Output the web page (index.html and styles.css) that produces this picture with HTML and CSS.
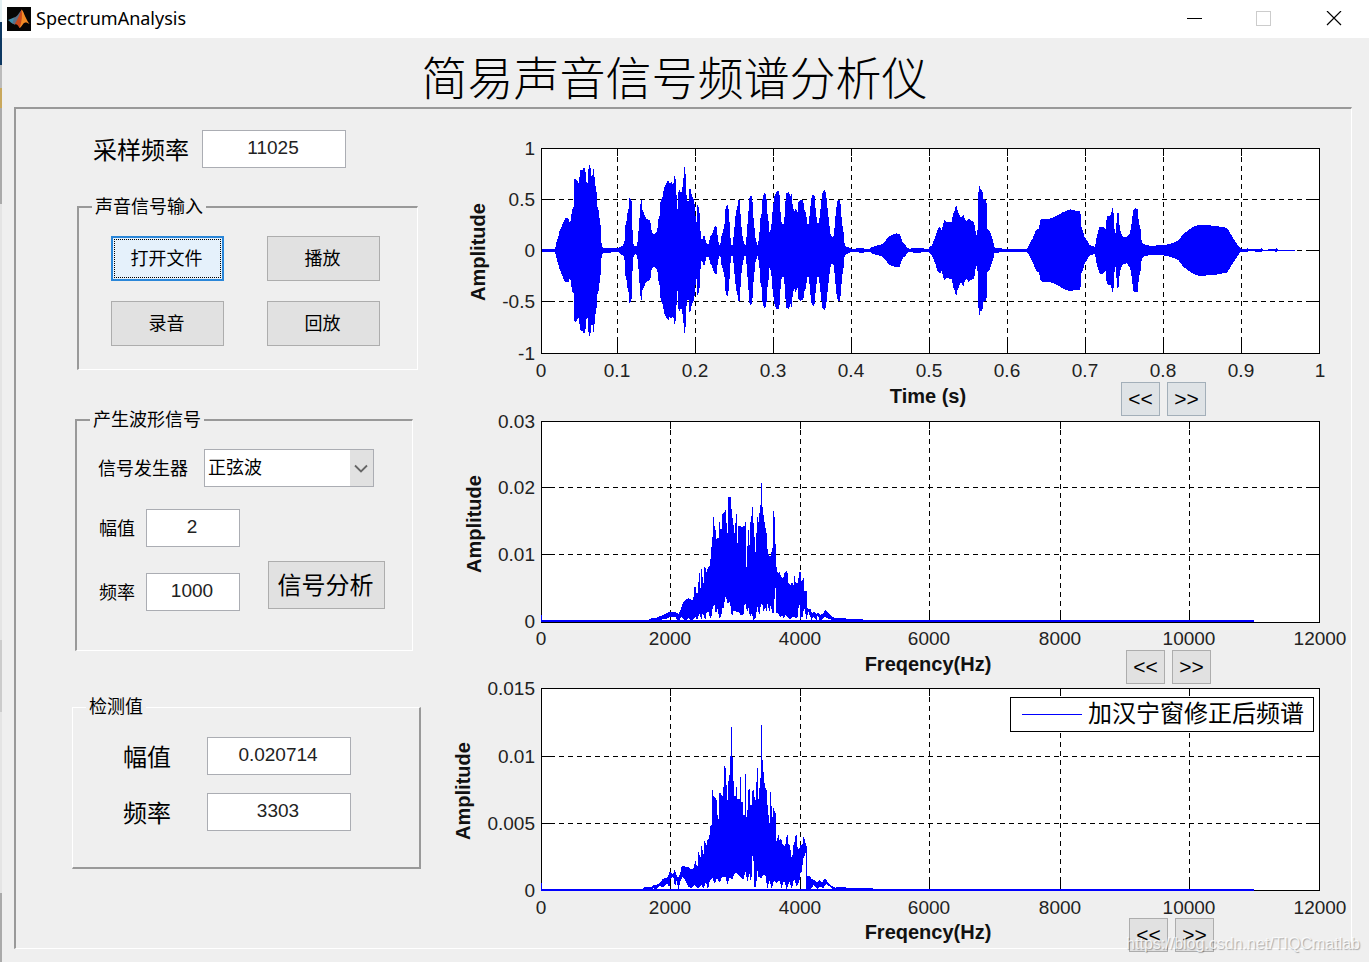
FILE: index.html
```html
<!DOCTYPE html>
<html lang="zh-CN">
<head>
<meta charset="utf-8">
<title>SpectrumAnalysis</title>
<link rel="stylesheet" href="styles.css">
</head>
<body>
<div class="window">
  <header class="titlebar">
    <svg class="app-icon" width="24" height="24" viewBox="0 0 24 24" aria-hidden="true">
      <rect width="24" height="24" fill="#050505"/>
      <path d="M1 13 7 10.5 10 12 7.5 17.5 4.5 16z" fill="#3f8fae"/>
      <path d="M7 10.5C10 10 12 6 14.5 3L12 12 8 17.5 5.500 16.500z" fill="#5d6f86"/>
      <path d="M14.500 2.500C13 6 11.500 11 7.500 17.500 9.500 16.500 11 18 12.500 21 15 19 16 15.500 18 15.500L17 7z" fill="#c8481c"/>
      <path d="M14.500 2.500C16.500 3.500 18 11 22.500 17 20 15.500 18 14.500 16 17 15 18.500 13.500 20.500 12.500 21 15 15 15.500 8 14.500 2.500z" fill="#f08a25"/>
    </svg>
    <span class="app-name">SpectrumAnalysis</span>
    <div class="window-controls">
      <button type="button" aria-label="最小化"><svg width="16" height="16" viewBox="0 0 16 16"><path d="M1 7.500H16" stroke="#000"/></svg></button>
      <button type="button" aria-label="最大化" disabled><svg width="16" height="16" viewBox="0 0 16 16"><rect x=".5" y=".5" width="14" height="14" fill="none" stroke="#ccc"/></svg></button>
      <button type="button" aria-label="关闭"><svg width="16" height="16" viewBox="0 0 16 16"><path d="M1 0 15 14M15 0 1 14" stroke="#000" stroke-width="1.200"/></svg></button>
    </div>
  </header>
  <h1 class="heading">简易声音信号频谱分析仪</h1>
  <main class="panel">
    <form class="controls">
      <div class="field sampling">
        <label class="large" for="rate">采样频率</label>
        <input class="wide" id="rate" type="text" value="11025">
      </div>
      <fieldset class="group sound">
        <legend>声音信号输入</legend>
        <div class="button-grid">
          <button class="btn focused" type="button">打开文件</button>
          <button class="btn" type="button">播放</button>
          <button class="btn" type="button">录音</button>
          <button class="btn" type="button">回放</button>
        </div>
      </fieldset>
      <fieldset class="group generator">
        <legend>产生波形信号</legend>
        <div class="field source">
          <label for="source">信号发生器</label>
          <span class="select">
            <select id="source"><option>正弦波</option></select>
            <svg class="arrow" viewBox="0 0 23 34" aria-hidden="true"><path d="M5 14.500 11 20.500 17 14.500" fill="none" stroke="#666" stroke-width="1.800"/></svg>
          </span>
        </div>
        <div class="wave">
          <div class="wave-fields">
            <div class="field"><label for="amp">幅值</label><input id="amp" type="text" value="2"></div>
            <div class="field"><label for="freq">频率</label><input id="freq" type="text" value="1000"></div>
          </div>
          <button class="btn analyse" type="button">信号分析</button>
        </div>
      </fieldset>
      <fieldset class="group result">
        <legend>检测值</legend>
        <div class="result-fields">
          <div class="field"><label class="large" for="ramp">幅值</label><input class="wide" id="ramp" type="text" value="0.020714"></div>
          <div class="field"><label class="large" for="rfreq">频率</label><input class="wide" id="rfreq" type="text" value="3303"></div>
        </div>
      </fieldset>
    </form>

    <section class="charts">
      <figure class="chart">
        <svg class="plot" viewBox="440 109 911 273" role="img" aria-label="Amplitude / Time (s)">
          <rect class="area" x="541" y="148" width="779" height="205"/>
          <path class="grid" d="M541 199.500H1320M541 250.500H1320M541 301.500H1320M617.500 148V353M695.500 148V353M773.500 148V353M851.500 148V353M929.500 148V353M1007.500 148V353M1085.500 148V353M1163.500 148V353M1241.500 148V353"/>
          <path class="tick" d="M541 199.500h12M541 250.500h12M541 301.500h12M1320 199.500h-14M1320 250.500h-14M1320 301.500h-14M617.500 148v8m0 197v-12M695.500 148v8m0 197v-12M773.500 148v8m0 197v-12M851.500 148v8m0 197v-12M929.500 148v8m0 197v-12M1007.500 148v8m0 197v-12M1085.500 148v8m0 197v-12M1163.500 148v8m0 197v-12M1241.500 148v8m0 197v-12"/>
          <g class="signal" transform="translate(530 130) scale(.33333)">
            <path id="half" d="M33 361 33 357 75 357 78 345 80 335 85 320 88 305 93 295 98 282 103 270 106 265 115 265 118 275 121 278 123 258 128 235 131 232 131 150 136 145 140 150 146 160 148 160 149 125 153 118 158 120 161 113 166 115 168 155 174 160 176 105 181 105 183 135 187 140 190 117 193 118 194 160 199 178 202 230 206 240 208 262 211 270 213 330 217 350 221 354 265 355 272 350 280 345 284 330 285 290 290 270 292 250 296 235 298 203 301 203 302 210 305 215 307 290 310 340 315 350 320 348 324 330 327 280 330 250 332 215 335 210 337 240 342 250 348 266 358 270 362 280 365 305 371 312 378 308 382 300 385 270 389 255 392 210 398 200 402 175 408 160 415 150 418 160 424 156 430 165 432 138 436 140 439 180 441 238 444 238 446 170 450 185 456 185 460 150 463 112 466 112 468 185 473 215 477 210 479 167 482 180 486 200 490 205 494 225 498 275 500 275 502 225 507 235 510 262 512 315 515 330 519 325 522 310 525 325 530 342 537 342 540 320 546 315 550 300 555 288 560 290 563 320 567 345 571 345 574 320 580 300 584 280 586 240 590 225 594 225 597 250 600 300 603 345 608 345 612 310 615 275 618 245 622 230 625 210 629 210 632 260 636 310 640 330 644 345 648 345 651 300 655 250 658 205 663 195 667 205 669 250 673 290 677 330 683 345 688 320 690 270 695 250 698 200 704 188 709 195 711 240 716 275 719 312 724 290 727 250 730 225 733 200 740 185 748 183 750 230 755 280 762 282 765 240 768 190 776 186 782 200 786 188 788 230 793 245 798 232 802 255 805 215 812 210 820 212 822 235 828 250 832 282 837 280 840 240 845 200 850 193 854 200 857 240 862 280 867 280 870 250 874 215 877 190 883 180 888 190 892 230 897 275 901 310 906 322 911 318 915 280 918 240 922 215 928 207 932 225 936 280 941 310 944 345 948 350 955 352 965 357 1000 353 1005 357 1020 356 1025 352 1040 347 1055 343 1065 335 1075 320 1085 315 1098 310 1110 312 1113 325 1120 340 1128 345 1130 352 1138 357 1150 354 1170 354 1195 357 1200 350 1205 348 1210 335 1218 315 1222 300 1230 290 1235 300 1243 270 1250 278 1265 275 1270 250 1275 240 1278 220 1282 240 1288 255 1293 265 1300 252 1305 270 1310 275 1316 266 1322 272 1332 275 1336 300 1338 315 1342 312 1344 265 1346 165 1350 170 1352 180 1357 180 1360 207 1368 210 1371 225 1372 295 1380 305 1385 320 1390 335 1393 352 1405 354 1420 356 1490 356 1495 350 1500 340 1508 325 1518 300 1527 295 1532 268 1540 267 1560 266 1580 258 1600 246 1620 238 1632 241 1646 243 1650 243 1652 255 1654 290 1660 305 1663 320 1672 333 1678 345 1685 348 1696 350 1697 335 1703 310 1708 292 1715 290 1722 293 1728 300 1730 260 1735 258 1743 255 1747 235 1750 235 1752 280 1755 310 1758 310 1761 248 1766 250 1768 280 1773 310 1780 320 1790 322 1800 310 1805 280 1810 240 1817 235 1824 237 1826 275 1832 300 1835 335 1842 343 1860 347 1900 346 1920 342 1945 332 1960 312 1980 297 1995 288 2010 284 2060 288 2080 292 2090 293 2100 308 2110 325 2120 340 2128 352 2135 357 2150 357 2152 354 2156 358 2190 357 2194 354 2198 359 2235 358 2240 355 2244 359 2295 359 2295 361z"/>
            <use href="#half" transform="translate(0 722) scale(1 -1)"/>
          </g>
          <rect class="frame" x="541.500" y="148.500" width="778" height="205"/>
          <g class="ylab"><text x="535" y="155">1</text><text x="535" y="206">0.5</text><text x="535" y="257">0</text><text x="535" y="308">-0.5</text><text x="535" y="360">-1</text></g>
          <g class="xlab"><text x="541" y="377">0</text><text x="617" y="377">0.1</text><text x="695" y="377">0.2</text><text x="773" y="377">0.3</text><text x="851" y="377">0.4</text><text x="929" y="377">0.5</text><text x="1007" y="377">0.6</text><text x="1085" y="377">0.7</text><text x="1163" y="377">0.8</text><text x="1241" y="377">0.9</text><text x="1320" y="377">1</text></g>
          <text class="axis-name" transform="translate(485 252) rotate(-90)">Amplitude</text>
        </svg>
        <figcaption class="caption first">
          <span class="axis-title">Time (s)</span>
          <span class="pager"><button class="btn" type="button">&lt;&lt;</button><button class="btn" type="button">&gt;&gt;</button></span>
        </figcaption>
      </figure>

      <figure class="chart">
        <svg class="plot" viewBox="440 410 911 240" role="img" aria-label="Amplitude / Freqency(Hz)">
          <rect class="area" x="541" y="421" width="779" height="201"/>
          <path class="grid" d="M541 487.500H1320M541 554.500H1320M670.500 421V622M800.500 421V622M929.500 421V622M1060.500 421V622M1189.500 421V622"/>
          <path class="tick" d="M541 487.500h12M541 554.500h12M1320 487.500h-14M1320 554.500h-14M670.500 421v8m0 193v-12M800.500 421v8m0 193v-12M929.500 421v8m0 193v-12M1060.500 421v8m0 193v-12M1189.500 421v8m0 193v-12"/>
          <rect class="frame" x="541.500" y="421.500" width="778" height="201"/>
          <g class="signal">
            <path d="M541 615h1v5h712v2H541z"/>
            <path transform="translate(620 470) scale(.33333)" d="M0 451 85 451 88 446 100 445 112 442 125 437 140 430 148 425 165 425 175 432 181 422 186 405 192 394 205 384 213 388 220 392 222 355 226 348 230 370 235 370 236 308 239 308 240 355 244 355 244 298 247 298 248 340 252 340 253 290 256 290 258 307 262 307 263 290 268 292 271 268 274 265 275 200 278 200 279 141 282 141 282 168 286 168 288 210 293 205 297 203 298 155 301 155 301 177 305 177 307 132 313 128 316 120 319 120 320 190 324 190 325 82 332 82 333 113 337 120 338 163 342 165 343 190 346 190 347 131 350 131 351 220 354 220 355 168 362 168 364 172 370 168 374 168 375 155 378 155 379 292 382 292 383 181 386 181 387 225 390 225 392 137 396 137 397 110 400 110 401 200 404 200 405 247 409 247 410 141 413 141 414 157 418 157 419 104 424 104 424 38 427 38 427 110 430 110 431 155 436 155 437 190 441 190 442 235 447 258 453 258 456 235 459 235 460 122 463 122 463 141 466 141 467 292 471 292 473 310 477 310 478 303 483 320 490 325 493 310 500 303 503 310 505 340 512 345 516 335 521 345 522 317 525 317 527 340 533 340 536 320 539 305 543 305 545 340 549 325 552 325 553 362 560 362 562 415 572 417 576 430 583 425 590 432 594 425 600 435 608 432 615 420 622 425 630 432 637 440 645 444 660 443 680 446 728 447 730 451 730 455 640 453 632 447 625 447 615 440 605 450 600 455 593 435 590 453 580 440 575 450 565 425 560 448 556 430 552 410 549 440 544 440 542 455 539 405 536 405 534 440 528 445 520 440 512 448 505 445 497 435 492 445 486 435 480 442 474 430 468 430 467 355 464 355 463 430 458 430 452 405 448 425 443 400 439 425 436 412 430 425 427 402 423 402 418 435 412 410 407 445 400 450 396 430 390 440 385 410 381 430 378 402 374 402 370 435 362 435 356 425 350 425 340 422 336 445 330 396 322 400 318 380 315 380 312 415 306 415 304 440 298 443 292 415 288 435 283 402 278 415 274 440 270 445 266 425 260 425 256 450 248 430 244 448 238 430 232 450 226 440 215 455 205 445 195 455 185 440 175 455 165 440 150 440 140 446 100 454 0 455z"/>
          </g>
          <g class="ylab"><text x="535" y="428">0.03</text><text x="535" y="494">0.02</text><text x="535" y="561">0.01</text><text x="535" y="628">0</text></g>
          <g class="xlab"><text x="541" y="645">0</text><text x="670" y="645">2000</text><text x="800" y="645">4000</text><text x="929" y="645">6000</text><text x="1060" y="645">8000</text><text x="1189" y="645">10000</text><text x="1320" y="645">12000</text></g>
          <text class="axis-name" transform="translate(481 524) rotate(-90)">Amplitude</text>
        </svg>
        <figcaption class="caption second">
          <span class="axis-title">Freqency(Hz)</span>
          <span class="pager"><button class="btn" type="button">&lt;&lt;</button><button class="btn" type="button">&gt;&gt;</button></span>
        </figcaption>
      </figure>

      <figure class="chart">
        <svg class="plot" viewBox="440 678 911 240" role="img" aria-label="加汉宁窗修正后频谱">
          <rect class="area" x="541" y="688" width="779" height="202"/>
          <path class="grid" d="M541 756.500H1320M541 823.500H1320M670.500 688V890M800.500 688V890M929.500 688V890M1060.500 688V890M1189.500 688V890"/>
          <path class="tick" d="M541 756.500h12M541 823.500h12M1320 756.500h-14M1320 823.500h-14M670.500 688v8m0 194v-12M800.500 688v8m0 194v-12M929.500 688v8m0 194v-12M1060.500 688v8m0 194v-12M1189.500 688v8m0 194v-12"/>
          <rect class="frame" x="541.500" y="688.500" width="778" height="202"/>
          <g class="signal">
            <path d="M541 883h1v6h712v2H541z"/>
            <path transform="translate(620 700) scale(.33333)" d="M0 568 68 566 72 562 85 560 95 562 100 556 115 553 122 545 128 537 140 533 146 525 150 510 153 520 160 522 164 510 168 520 174 535 180 522 185 500 192 497 200 502 206 500 212 508 220 505 224 492 227 482 230 497 234 497 235 456 238 456 239 472 243 472 244 438 247 438 248 463 252 463 253 424 256 424 258 444 262 420 268 413 270 380 275 376 276 270 279 270 280 288 286 293 291 303 293 358 296 358 298 280 303 280 306 288 310 288 312 194 315 203 319 203 320 300 324 300 326 225 330 225 331 168 334 168 334 80 337 80 338 243 341 243 342 288 347 288 347 261 350 261 351 297 359 297 360 230 363 230 364 305 368 305 370 345 374 345 375 221 378 221 378 350 382 350 384 270 390 266 391 315 396 315 397 275 402 266 404 300 409 300 410 203 413 203 414 297 418 297 419 234 424 234 424 76 427 76 427 180 430 180 431 248 435 248 437 270 440 270 441 315 445 315 446 370 450 370 451 275 454 275 455 350 459 350 460 324 463 324 464 340 467 340 468 422 472 422 473 405 476 405 478 422 483 413 487 430 493 440 498 430 500 405 503 405 505 430 510 437 514 472 517 472 520 437 524 425 527 405 530 405 532 440 537 450 542 432 547 437 550 410 555 418 558 437 562 437 562 527 570 528 575 537 583 540 590 547 598 540 606 548 612 537 618 537 624 548 632 555 645 563 660 560 672 560 680 564 730 565 745 563 760 566 840 567 840 572 640 571 630 560 618 552 610 565 600 560 592 568 580 555 572 570 559 568 559 460 555 460 552 475 549 475 546 515 541 520 538 545 530 560 522 535 516 568 508 545 500 568 492 540 485 565 478 540 470 550 462 540 455 566 448 540 442 567 436 525 430 525 424 535 415 530 411 500 409 560 403 560 400 467 396 467 394 555 388 520 383 545 376 515 370 540 360 530 352 520 344 520 336 540 330 530 321 557 318 530 306 530 300 548 290 535 285 553 278 535 270 540 264 570 258 545 250 567 244 555 235 566 225 555 215 565 205 560 195 540 188 530 180 545 176 572 170 540 165 560 160 530 152 535 148 560 140 550 130 562 120 558 110 568 100 565 90 570 0 572z"/>
          </g>
          <rect class="legend-box" x="1010.500" y="697.500" width="303" height="34"/>
          <path class="legend-line" d="M1022 714.500H1082"/>
          <text class="legend-text" x="1088" y="722">加汉宁窗修正后频谱</text>
          <g class="ylab"><text x="535" y="695">0.015</text><text x="535" y="763">0.01</text><text x="535" y="830">0.005</text><text x="535" y="897">0</text></g>
          <g class="xlab"><text x="541" y="914">0</text><text x="670" y="914">2000</text><text x="800" y="914">4000</text><text x="929" y="914">6000</text><text x="1060" y="914">8000</text><text x="1189" y="914">10000</text><text x="1320" y="914">12000</text></g>
          <text class="axis-name" transform="translate(470 791) rotate(-90)">Amplitude</text>
        </svg>
        <figcaption class="caption third">
          <span class="axis-title">Freqency(Hz)</span>
          <span class="pager"><button class="btn" type="button">&lt;&lt;</button><button class="btn" type="button">&gt;&gt;</button></span>
        </figcaption>
      </figure>
    </section>
  </main>
  <span class="watermark">https://blog.csdn.net/TIQCmatlab</span>
</div>
</body>
</html>
```
FILE: styles.css
```css
* { box-sizing: border-box; }

body {
  margin: 0;
  min-height: 100vh;
  padding-left: 2px;
  background: linear-gradient(#e3f0f3 22px, #0d3862 22px 65px, #bbb 65px 88px, #c9a85c 88px 108px, #aaa 108px 204px, #e4e4e4 204px 640px, #ccc 640px 712px, #e4e4e4 712px 893px, #aaa 893px);
  font-family: "Liberation Sans", "Noto Sans CJK SC", sans-serif;
  color: #000;
}

.window {
  position: relative;
  display: flex;
  flex-direction: column;
  min-height: 100vh;
  background: #efefef;
}

.titlebar {
  display: flex;
  align-items: center;
  height: 38px;
  padding-left: 5px;
  background: #fff;
}

.app-icon { display: block; }

.app-name {
  flex: 1;
  padding: 0 0 2px 5px;
  font: 18px/24px "Noto Sans", sans-serif;
}

.window-controls { display: flex; }

.window-controls button {
  display: grid;
  place-items: center;
  width: 70px;
  height: 38px;
  padding: 0;
  border: 0;
  background: none;
}

.heading {
  height: 69px;
  margin: 0;
  padding-right: 22px;
  font-size: 46px;
  font-weight: 300;
  line-height: 82px;
  text-align: center;
}

.panel {
  display: flex;
  flex: 1;
  margin: 0 17px 13px 12px;
  border: solid #999;
  border-width: 2px 1px 1px 2px;
  border-right-color: #fff;
  border-bottom-color: #fff;
}

.controls {
  display: flex;
  flex-direction: column;
  align-items: flex-start;
  flex: none;
  width: 424px;
  padding-top: 21px;
  font-size: 18px;
}

.field {
  display: flex;
  align-items: center;
}

.field label { padding-bottom: 2px; }

.large { font-size: 24px; }

input {
  width: 94px;
  height: 38px;
  padding: 0 2px 3px 0;
  border: 1px solid #abadb3;
  background: #fff;
  color: #222;
  font: 19px/24px "Liberation Sans", sans-serif;
  text-align: center;
}

.wide { width: 144px; }

.sampling {
  gap: 13px;
  margin-left: 77px;
}

.group {
  min-width: 0;
  margin: 0;
  padding: 0;
  border: solid #999;
  border-width: 2px 1px 1px 2px;
  border-right-color: #fff;
  border-bottom-color: #fff;
}

.group legend {
  margin-left: 13px;
  padding: 0 3px;
  line-height: 20px;
}

.sound {
  width: 341px;
  margin: 29px 0 0 61px;
}

.button-grid {
  display: grid;
  grid-template-columns: 113px 113px;
  grid-auto-rows: 45px;
  gap: 20px 43px;
  padding: 19px 32px 23px;
}

.btn {
  padding: 0 2px 3px 0;
  border: 1px solid #adadad;
  background: #e1e1e1;
  color: #000;
  font-family: inherit;
  font-size: 18px;
}

.focused {
  border: 2px solid #2a86d8;
  background: #e5f1fb;
  outline: 1px dotted #000;
  outline-offset: -4px;
}

.generator {
  width: 338px;
  margin: 40px 0 0 59px;
}

.source {
  gap: 16px;
  padding: 19px 0 0 21px;
}

.select {
  position: relative;
  display: block;
  width: 170px;
  height: 38px;
}

.select select {
  width: 100%;
  height: 100%;
  padding: 0 26px 0 3px;
  border: 1px solid #abadb3;
  border-radius: 0;
  background: #fff;
  color: #000;
  font: inherit;
  appearance: none;
}

.arrow {
  position: absolute;
  top: 1px;
  right: 1px;
  width: 23px;
  height: 36px;
  background: #e1e1e1;
  pointer-events: none;
}

.wave {
  display: flex;
  align-items: flex-end;
  gap: 28px;
  padding: 22px 0 39px 22px;
}

.wave-fields {
  display: grid;
  gap: 26px;
}

.wave-fields .field { gap: 11px; }

.analyse {
  width: 117px;
  height: 48px;
  margin-bottom: 2px;
  font-size: 24px;
}

.result {
  width: 349px;
  margin: 46px 0 0 56px;
  border-width: 1px 2px 2px 1px;
  border-color: #fff #999 #999 #fff;
}

.result-fields {
  display: grid;
  gap: 18px;
  padding: 20px 0 36px 50px;
}

.result-fields .field { gap: 36px; }

.charts {
  flex: 1;
  min-width: 0;
}

.chart { margin: 0; }

.plot {
  display: block;
  width: 100%;
  height: auto;
  overflow: visible;
}

.area { fill: #fff; }

.frame, .grid, .tick {
  fill: none;
  stroke: #000;
  shape-rendering: crispEdges;
}

.grid { stroke-dasharray: 5 4; }

.signal {
  fill: #00f;
  shape-rendering: crispEdges;
}

.xlab, .ylab {
  fill: #222;
  font-size: 19px;
}

.xlab { text-anchor: middle; }

.ylab { text-anchor: end; }

.axis-name {
  fill: #111;
  font-size: 20px;
  font-weight: bold;
  text-anchor: middle;
}

.legend-box {
  fill: #fff;
  stroke: #000;
  shape-rendering: crispEdges;
}

.legend-line {
  fill: none;
  stroke: #00f;
  shape-rendering: crispEdges;
}

.legend-text { font-size: 24px; }

.caption {
  position: relative;
  z-index: 1;
  display: grid;
  grid-template-columns: 1fr auto 1fr;
  height: 28px;
  padding: 0 36px 0 101px;
}

.axis-title {
  grid-column: 2;
  color: #111;
  font-size: 20px;
  font-weight: bold;
  line-height: 28px;
}

.pager {
  display: flex;
  justify-content: flex-end;
  gap: 7px;
}

.pager .btn {
  width: 39px;
  height: 34px;
  padding: 0;
  font-size: 21px;
}

.first .pager { padding-right: 109px; }

.second .pager { padding-right: 104px; }

.third .pager { padding-right: 101px; }

.first .btn {
  border-color: #a3afb9;
  background: #dfe3e6;
}

.watermark {
  position: absolute;
  right: 9px;
  bottom: 8px;
  z-index: 2;
  color: rgba(255, 255, 255, .8);
  font-size: 16px;
  line-height: 20px;
  text-shadow: 1px 1px 1px rgba(0, 0, 0, .3);
}
```
